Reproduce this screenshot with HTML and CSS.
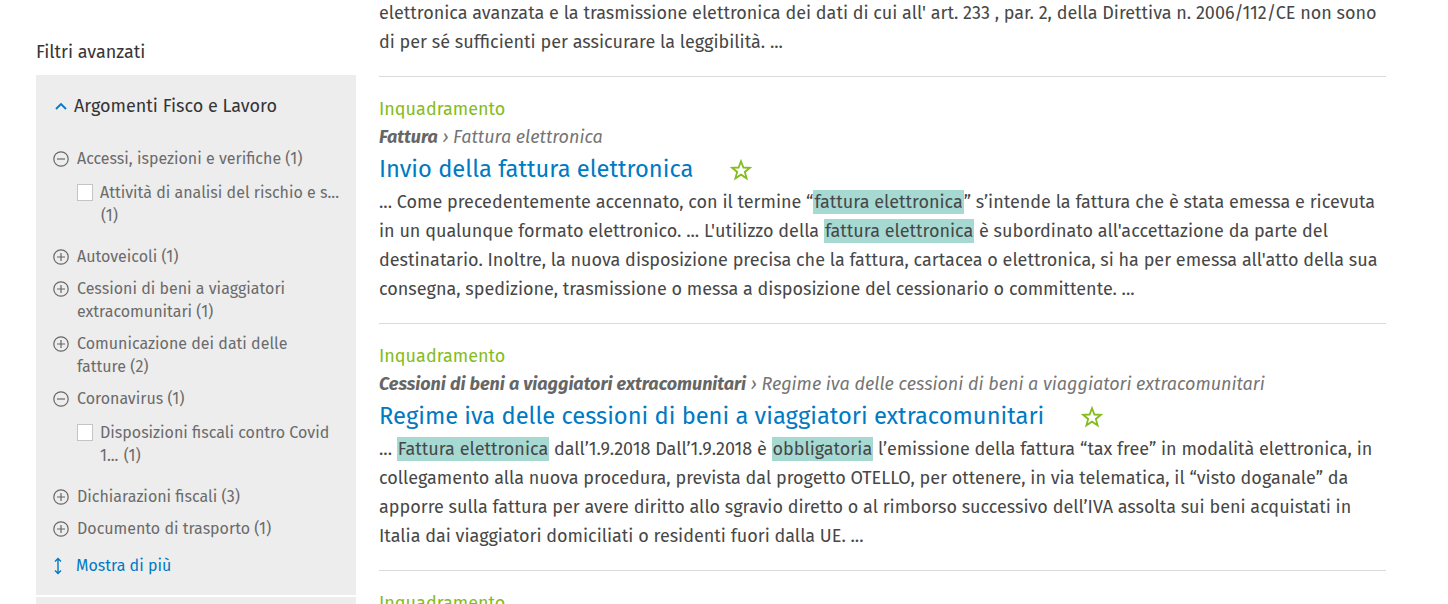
FILE: index.html
```html
<!DOCTYPE html>
<html lang="it">
<head>
<meta charset="utf-8">
<title>Risultati</title>
<link rel="stylesheet" href="styles.css">
</head>
<body>
<div class="page">
  <aside class="sidebar">
    <h2 class="sidebar-title">Filtri avanzati</h2>
    <section class="filter-box">
      <div class="filter-head">
        <svg class="chev" width="12" height="8" viewBox="0 0 12 8"><path d="M1 7 L6 2 L11 7" fill="none" stroke="#007ac3" stroke-width="1.8"/></svg>
        <span>Argomenti Fisco e Lavoro</span>
      </div>
      <ul class="filter-list">
        <li class="item">
          <div class="row"><svg class="ic" width="16" height="16" viewBox="0 0 16 16"><circle cx="8" cy="8" r="7.2" fill="none" stroke="#666" stroke-width="1.2"/><path d="M4 8 H12" stroke="#666" stroke-width="1.2"/></svg><span class="lbl">Accessi, ispezioni e verifiche (1)</span></div>
          <ul class="sub">
            <li class="row"><span class="cb"></span><span class="lbl">Attività di analisi del rischio e s... <span class="cnt">(1)</span></span></li>
          </ul>
        </li>
        <li class="item"><div class="row"><svg class="ic" width="16" height="16" viewBox="0 0 16 16"><circle cx="8" cy="8" r="7.2" fill="none" stroke="#666" stroke-width="1.2"/><path d="M4 8 H12 M8 4 V12" stroke="#666" stroke-width="1.2"/></svg><span class="lbl">Autoveicoli (1)</span></div></li>
        <li class="item"><div class="row"><svg class="ic" width="16" height="16" viewBox="0 0 16 16"><circle cx="8" cy="8" r="7.2" fill="none" stroke="#666" stroke-width="1.2"/><path d="M4 8 H12 M8 4 V12" stroke="#666" stroke-width="1.2"/></svg><span class="lbl">Cessioni di beni a viaggiatori extracomunitari (1)</span></div></li>
        <li class="item"><div class="row"><svg class="ic" width="16" height="16" viewBox="0 0 16 16"><circle cx="8" cy="8" r="7.2" fill="none" stroke="#666" stroke-width="1.2"/><path d="M4 8 H12 M8 4 V12" stroke="#666" stroke-width="1.2"/></svg><span class="lbl">Comunicazione dei dati delle fatture (2)</span></div></li>
        <li class="item">
          <div class="row"><svg class="ic" width="16" height="16" viewBox="0 0 16 16"><circle cx="8" cy="8" r="7.2" fill="none" stroke="#666" stroke-width="1.2"/><path d="M4 8 H12" stroke="#666" stroke-width="1.2"/></svg><span class="lbl">Coronavirus (1)</span></div>
          <ul class="sub">
            <li class="row"><span class="cb"></span><span class="lbl">Disposizioni fiscali contro Covid 1... <span class="cnt">(1)</span></span></li>
          </ul>
        </li>
        <li class="item"><div class="row"><svg class="ic" width="16" height="16" viewBox="0 0 16 16"><circle cx="8" cy="8" r="7.2" fill="none" stroke="#666" stroke-width="1.2"/><path d="M4 8 H12 M8 4 V12" stroke="#666" stroke-width="1.2"/></svg><span class="lbl">Dichiarazioni fiscali (3)</span></div></li>
        <li class="item"><div class="row"><svg class="ic" width="16" height="16" viewBox="0 0 16 16"><circle cx="8" cy="8" r="7.2" fill="none" stroke="#666" stroke-width="1.2"/><path d="M4 8 H12 M8 4 V12" stroke="#666" stroke-width="1.2"/></svg><span class="lbl">Documento di trasporto (1)</span></div></li>
      </ul>
      <a class="more" href="#"><svg class="more-ic" width="8" height="18" viewBox="0 0 8 18"><path d="M4 1.5 V16.5 M1 4.5 L4 1.5 L7 4.5 M1 13.5 L4 16.5 L7 13.5" fill="none" stroke="#007ac3" stroke-width="1.4"/></svg><span>Mostra di più</span></a>
    </section>
    <div class="filter-box next"></div>
  </aside>

  <main class="results">
    <article class="result first">
      <p class="snippet">elettronica avanzata e la trasmissione elettronica dei dati di cui all' art. 233 , par. 2, della Direttiva n. 2006/112/CE non sono di per sé sufficienti per assicurare la leggibilità. ...</p>
    </article>
    <article class="result">
      <div class="cat">Inquadramento</div>
      <div class="crumb"><b>Fattura</b> › Fattura elettronica</div>
      <h3 class="title"><a href="#">Invio della fattura elettronica</a><svg class="star" width="22" height="22" viewBox="0 0 24 24"><path d="M12 2.5 L14.6 9.3 L21.8 9.6 L16.2 14.1 L18.1 21.1 L12 17.1 L5.9 21.1 L7.8 14.1 L2.2 9.6 L9.4 9.3 Z" fill="none" stroke="#85bc20" stroke-width="2" stroke-linejoin="miter"/></svg></h3>
      <p class="snippet">... Come precedentemente accennato, con il termine “<mark>fattura elettronica</mark>” s’intende la fattura che è stata emessa e ricevuta in un qualunque formato elettronico. ... L'utilizzo della <mark>fattura elettronica</mark> è subordinato all'accettazione da parte del destinatario. Inoltre, la nuova disposizione precisa che la fattura, cartacea o elettronica, si ha per emessa all'atto della sua consegna, spedizione, trasmissione o messa a disposizione del cessionario o committente. ...</p>
    </article>
    <article class="result">
      <div class="cat">Inquadramento</div>
      <div class="crumb"><b>Cessioni di beni a viaggiatori extracomunitari</b> › Regime iva delle cessioni di beni a viaggiatori extracomunitari</div>
      <h3 class="title"><a href="#">Regime iva delle cessioni di beni a viaggiatori extracomunitari</a><svg class="star" width="22" height="22" viewBox="0 0 24 24"><path d="M12 2.5 L14.6 9.3 L21.8 9.6 L16.2 14.1 L18.1 21.1 L12 17.1 L5.9 21.1 L7.8 14.1 L2.2 9.6 L9.4 9.3 Z" fill="none" stroke="#85bc20" stroke-width="2" stroke-linejoin="miter"/></svg></h3>
      <p class="snippet">... <mark>Fattura elettronica</mark> dall’1.9.2018 Dall’1.9.2018 è <mark>obbligatoria</mark> l’emissione della fattura “tax free” in modalità elettronica, in collegamento alla nuova procedura, prevista dal progetto OTELLO, per ottenere, in via telematica, il “visto doganale” da apporre sulla fattura per avere diritto allo sgravio diretto o al rimborso successivo dell’IVA assolta sui beni acquistati in Italia dai viaggiatori domiciliati o residenti fuori dalla UE. ...</p>
    </article>
    <article class="result">
      <div class="cat">Inquadramento</div>
    </article>
  </main>
</div>
</body>
</html>
```
FILE: styles.css
```css
* { box-sizing: border-box; }
html, body { margin: 0; padding: 0; background: #fff; }
body {
  font-family: "Fira Sans", "Open Sans", "Noto Sans", sans-serif;
  color: #474747;
  overflow: hidden;
  height: 604px;
}
.page {
  display: flex;
  align-items: flex-start;
  gap: 23px;
  padding-left: 36px;
}
.sidebar {
  width: 320px;
  flex: none;
  padding-top: 40px;
}
.sidebar-title {
  margin: 0 0 11px;
  font-size: 18px;
  font-weight: 400;
  line-height: 24px;
  color: #353535;
}
.filter-box {
  background: #ededed;
  padding: 18px 19px 18px 17px;
}
.filter-box.next { margin-top: 2px; height: 40px; }
.filter-head {
  display: flex;
  align-items: center;
  gap: 7px;
  font-size: 18px;
  line-height: 26px;
  color: #353535;
  padding-left: 2px;
}
.chev { flex: none; }
.filter-list, .sub { list-style: none; margin: 0; padding: 0; }
.filter-list { margin-top: 28px; display: flex; flex-direction: column; gap: 9px; }
.row { display: flex; align-items: flex-start; font-size: 16px; line-height: 23px; color: #6b6b6b; }
.ic { flex: none; margin-top: 4px; margin-right: 8px; }
.sub { margin: 11px -8px 9px 24px; }
.cb {
  flex: none;
  width: 16px; height: 17px;
  background: #fff;
  border: 1px solid #c4c4c4;
  margin-top: 3px;
  margin-right: 7px;
}
.cnt { display: inline-block; margin-left: 1px; }
.more {
  display: flex;
  align-items: center;
  gap: 14px;
  margin-top: 14px;
  font-size: 16px;
  line-height: 23px;
  color: #007ac3;
  text-decoration: none;
  padding-left: 1px;
}
.results {
  width: 1007px;
  flex: none;
}
.result {
  border-bottom: 1px solid #dadada;
  padding: 18px 0 19px;
}
.result.first { padding: 0 0 19px; margin-top: -1px; }
.cat { font-size: 18px; line-height: 28px; color: #85bc20; }
.crumb { font-size: 18px; line-height: 28px; color: #757575; font-style: italic; }
.crumb b { font-weight: 700; color: #666; }
.title {
  margin: 0;
  font-size: 23.7px;
  font-weight: 400;
  line-height: 37px;
  display: flex;
  align-items: center;
  gap: 37px;
}
.title a { color: #007ac3; text-decoration: none; }
.star { flex: none; }
.snippet { margin: 0; font-size: 18px; line-height: 29px; color: #474747; }
mark { background: #a5d9d2; color: #474747; padding: 1px 1px; }
```
